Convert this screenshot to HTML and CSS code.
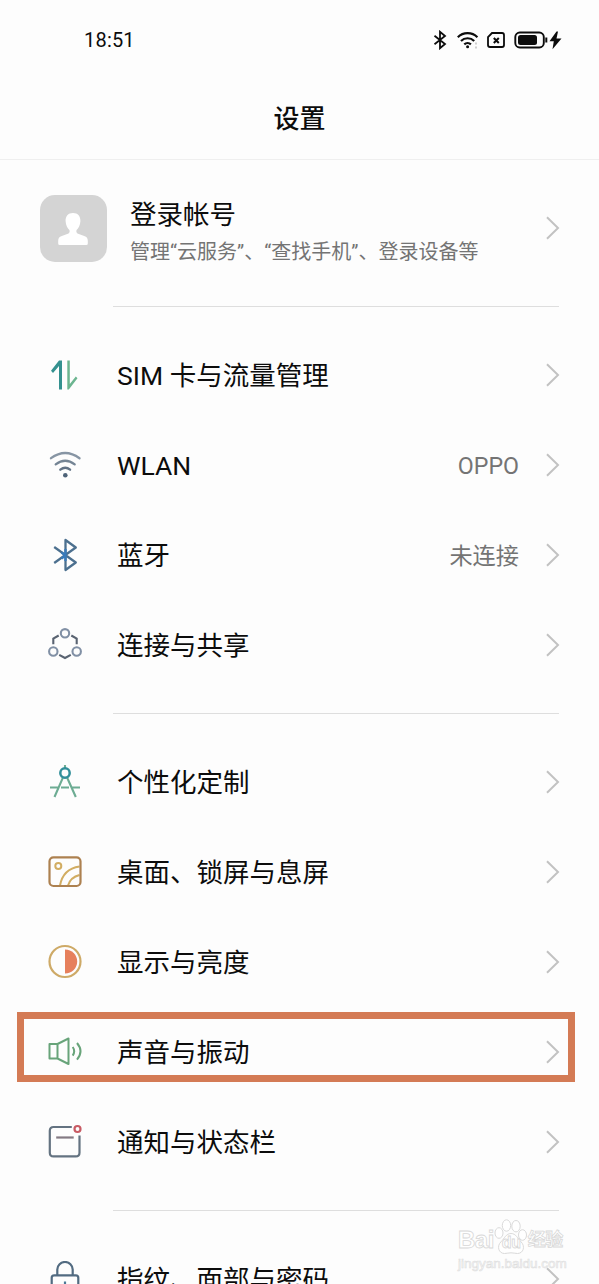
FILE: index.html
```html
<!DOCTYPE html>
<html lang="zh-CN">
<head>
<meta charset="utf-8">
<title>设置</title>
<link rel="stylesheet" href="styles.css">
</head>
<body>
<svg width="0" height="0" class="defs" aria-hidden="true">
  <defs>
    <symbol id="chev" viewBox="0 0 14 24"><path d="M1 1.2 12 12 1 22.8" fill="none" stroke="#c2c2c2" stroke-width="2"/></symbol>
  </defs>
</svg>
<div class="screen">
  <header class="status">
    <span class="clock">18:51</span>
    <svg class="status-icons" width="130" height="20" viewBox="0 0 130 20" fill="none" stroke="#0c0c0c">
      <path d="M2.5 5.8 13 14 8 18.2V1.8L13 6 2.5 14.2" stroke-width="1.8"/>
      <g stroke-width="2.2"><path d="M25.8 7.2a14 14 0 0 1 19.6 0"/><path d="M29 11a9.3 9.3 0 0 1 13.2 0"/><path d="M32.3 14.4a4.8 4.8 0 0 1 6.6 0"/></g>
      <circle cx="35.6" cy="16.7" r="1.5" fill="#0c0c0c" stroke="none"/>
      <path d="M44 12.5v2M44 16.5v2" stroke="#cfcfcf" stroke-width="2"/>
      <path d="M60 3h10q2 0 2 2v10q0 2-2 2H58q-2 0-2-2V7z" stroke-width="1.8"/>
      <path d="m61.8 8 5 5m0-5-5 5" stroke-width="2"/>
      <rect x="83.3" y="2.5" width="28.5" height="15" rx="4.5" stroke-width="1.9"/>
      <rect x="86" y="5" width="19" height="10" rx="2.5" fill="#0c0c0c" stroke="none"/>
      <path d="M114.300 7.500v5" stroke-width="2"/>
      <path d="M124.500 1.500 117.500 11.300h4.300l-1.300 8 9-10.800h-5l1.500-7z" fill="#0c0c0c" stroke="none"/>
    </svg>
  </header>
  <h1 class="title">设置</h1>

  <section class="account">
    <div class="avatar">
      <svg width="30" height="32" viewBox="0 0 30 32" fill="#fff"><path d="M15 0c5 0 7.600 3.500 7.400 8.200-.2 4-1.900 6.800-3.800 8.800-.8 2 .1 3.300 2.200 4.100l5.400 1.900c2.700 1 3.600 2.300 3.600 5v2.500q0 1.500-1.500 1.500H1.700Q.2 32 .2 30.500V28c0-2.700.9-4 3.600-5l5.400-1.900c2.100-.8 3-2.100 2.200-4.100-1.900-2-3.600-4.800-3.800-8.800C7.400 3.500 10 0 15 0z"/></svg>
    </div>
    <div class="account-text">
      <div class="account-name">登录帐号</div>
      <div class="account-sub">管理“云服务”、“查找手机”、登录设备等</div>
    </div>
    <svg class="chevron"><use href="#chev"/></svg>
  </section>
  <div class="divider"></div>

  <a class="row">
    <svg class="icon" viewBox="0 0 36 36" stroke="none"><path d="M4 13.700 12 3.500h3V32.500h-3V9L6 16z" fill="#34918f"/><path d="M20.300 3.500h2.500V27l6-7.500 1.700 1.800-8.700 11.200h-1.500z" fill="#6cb590"/></svg>
    <span class="label">SIM 卡与流量管理</span><svg class="chevron"><use href="#chev"/></svg>
  </a>
  <a class="row">
    <svg class="icon" viewBox="0 0 36 36" fill="none" stroke-width="2.300" stroke-linecap="round"><path d="M4 11.200q14.200-10.500 28.500 0" stroke="#8795a4"/><path d="M8.700 17.300q9.500-7.200 19 0" stroke="#748494"/><path d="M13.300 22.700q5-4 9.800 0" stroke="#617285"/><circle cx="18.300" cy="28.300" r="2.300" fill="#4e6378" stroke="none"/></svg>
    <span class="label">WLAN</span><span class="value">OPPO</span><svg class="chevron"><use href="#chev"/></svg>
  </a>
  <a class="row">
    <svg class="icon" viewBox="0 0 36 36" fill="none" stroke-width="2.300" stroke-linejoin="round"><path d="M18.500 18.300V3L28.800 10.500 7.200 26M18.500 18.300V33L28.800 25.500 7.200 10" stroke="#4c708f"/><path d="m14.500 15.500 4 3-4 3M18.500 12v12" stroke="#397bbb"/></svg>
    <span class="label">蓝牙</span><span class="value">未连接</span><svg class="chevron"><use href="#chev"/></svg>
  </a>
  <a class="row">
    <svg class="icon" viewBox="0 0 36 36" fill="none" stroke-width="2.100"><g stroke="#8190a5"><circle cx="18" cy="6.300" r="4.200"/><circle cx="6.300" cy="24.500" r="4.200"/><circle cx="29.700" cy="24.500" r="4.200"/></g><path d="M11.700 8.500 6.300 11.500v5.700M24.300 8.500l5.400 3v5.700M12.200 27.800l5.800 3.200 5.800-3.200" stroke="#596371"/></svg>
    <span class="label">连接与共享</span><svg class="chevron"><use href="#chev"/></svg>
  </a>
  <div class="divider"></div>

  <a class="row">
    <svg class="icon" viewBox="0 0 36 36" fill="none" stroke-width="2.100"><path d="M18 1v3M15.800 13.800 7.500 33M20.200 13.800 28.800 33M3 23.500h8.500M14 23.500h8M24.500 23.500H33" stroke="#6dac93"/><circle cx="18" cy="9" r="4.700" stroke="#328f9a" stroke-width="2.500"/></svg>
    <span class="label">个性化定制</span><svg class="chevron"><use href="#chev"/></svg>
  </a>
  <a class="row">
    <svg class="icon" viewBox="0 0 36 36" fill="none" stroke-width="2"><g stroke="#d2ad62"><circle cx="11.300" cy="12" r="3"/><path d="M13 31.500C15 20.500 22 14 32.500 12.500M21 31.500c1.700-5.500 5.500-9 11.500-10.500"/></g><rect x="2.500" y="3.300" width="31" height="28.700" rx="4" stroke="#ad8150" stroke-width="2.200"/></svg>
    <span class="label">桌面、锁屏与息屏</span><svg class="chevron"><use href="#chev"/></svg>
  </a>
  <a class="row">
    <svg class="icon" viewBox="0 0 36 36"><circle cx="18" cy="17.500" r="15.500" fill="none" stroke="#ceaa67" stroke-width="2.200"/><path d="M18 5.500C25 5.500 30.200 11 30.200 17.500s-5.200 12-12.200 12z" fill="#e6805c"/></svg>
    <span class="label">显示与亮度</span><svg class="chevron"><use href="#chev"/></svg>
  </a>
  <a class="row highlighted">
    <svg class="icon" viewBox="0 0 36 36" fill="none" stroke="#68a47a" stroke-width="2" stroke-linejoin="round"><path d="M10.500 10H2.500v14.500h8zM10.500 10 21.500 4.500V30l-11-5.500"/><path d="M25.700 13q3 4.300 0 8.600M30 9q7 8.300 0 16.600"/></svg>
    <span class="label">声音与振动</span><svg class="chevron"><use href="#chev"/></svg>
  </a>
  <a class="row">
    <svg class="icon" viewBox="0 0 36 36" fill="none" stroke-width="2.200"><path d="M24.800 3H6.500q-3.700 0-3.700 3.700v22q0 3.700 3.700 3.700h22.300q3.700 0 3.700-3.700V11.500" stroke="#647381"/><path d="M9.200 13.500h17.500" stroke="#847a83"/><circle cx="30.500" cy="5" r="3" stroke="#c85b64"/></svg>
    <span class="label">通知与状态栏</span><svg class="chevron"><use href="#chev"/></svg>
  </a>
  <div class="divider"></div>
  <a class="row">
    <svg class="icon" viewBox="0 0 36 36" fill="none" stroke="#526b81" stroke-width="2.200"><path d="M10.300 14V8.500a7.700 7.500 0 0 1 15.400 0V14"/><rect x="4.700" y="14.300" width="26.600" height="20" rx="2.500"/><path d="M18 20.500v8" stroke="#4b7896"/></svg>
    <span class="label">指纹、面部与密码</span><svg class="chevron"><use href="#chev"/></svg>
  </a>

  <div class="watermark">
    <div class="brand"><span>Bai</span>
      <span class="paw"><svg width="34" height="36" viewBox="0 0 34 36" fill="#fff" stroke="#dadada"><ellipse cx="5" cy="14" rx="4" ry="5.300"/><ellipse cx="12.500" cy="6.500" rx="4.200" ry="5.700"/><ellipse cx="22" cy="7.200" rx="4.200" ry="5.700"/><ellipse cx="28.500" cy="16" rx="4" ry="5.300"/><path d="M17 14.500c-5 0-6.500 5-10 8.300-4.500 4.200-2.500 11.700 3.500 11.700 2.500 0 4-.7 6.500-.7s4 .7 6.500.7c6 0 8-7.500 3.500-11.700C23.500 19.500 22 14.500 17 14.500z"/></svg><i>du</i></span>
      <span class="jy">经验</span></div>
    <div class="url">jingyan.baidu.com</div>
  </div>
</div>
</body>
</html>
```
FILE: styles.css
```css
*, *::before, *::after { box-sizing: border-box; }
html, body { margin: 0; height: 1284px; overflow: hidden; background: #fdfdfd; }
body { font-family: Roboto, "Noto Sans CJK SC", sans-serif; color: #0c0c0c; }
.defs { position: absolute; }
.screen { position: relative; width: 599px; height: 1284px; overflow: hidden; }

.status { display: flex; justify-content: space-between; align-items: center; height: 80px; padding: 0 37px 0 84px; }
.clock { font-size: 20px; letter-spacing: .2px; }
.status-icons { display: block; }
.title { margin: 0; height: 80px; line-height: 79px; font-size: 26px; font-weight: 500; text-align: center; border-bottom: 1px solid #efefef; }

.account { display: flex; align-items: flex-start; height: 123px; padding: 35px 39px 0 40px; }
.avatar { display: flex; align-items: center; justify-content: center; width: 67px; height: 67px; padding-right: 2px; border-radius: 15px; background: #d4d4d4; }
.account-text { flex: 1; margin-left: 23px; padding-top: 2px; white-space: nowrap; }
.account-name { font-size: 26.5px; line-height: 36px; }
.account-sub { font-size: 20px; line-height: 38px; color: #747474; }
.account .chevron { margin-top: 21px; }

.divider { height: 47px; padding: 23px 40px 0 113px; }
.divider::before { content: ""; display: block; height: 1px; background: #dedede; }

.row { position: relative; display: flex; align-items: center; height: 90px; padding: 0 39px 0 47px; }
.icon { width: 36px; height: 36px; flex: none; margin-right: 34px; }
.label { flex: 1; padding-top: 2px; font-size: 26.5px; line-height: 40px; white-space: nowrap; }
.value { padding-top: 1px; font-size: 23.2px; line-height: 40px; color: #747474; margin-right: 27px; }
.chevron { width: 14px; height: 24px; flex: none; }
.highlighted::after { content: ""; position: absolute; left: 17px; top: 5px; width: 558px; height: 70px; border: 7px solid #d47b55; }

.watermark { position: absolute; left: 458px; top: 1218px; width: 110px; color: #fff; -webkit-text-stroke: .8px #d8d8d8; }
.brand { display: flex; align-items: flex-end; height: 37px; font: bold 24px/30px "Liberation Sans", "Noto Sans CJK SC", sans-serif; letter-spacing: -.5px; }
.paw { position: relative; width: 34px; height: 36px; }
.paw i { position: absolute; left: 8px; top: 14px; font: bold 16px/20px "Liberation Sans", sans-serif; }
.jy { font-size: 18px; }
.url { font: 13.5px/17px "Liberation Sans", sans-serif; color: #fafafa; -webkit-text-stroke: .6px #dedede; }
```
